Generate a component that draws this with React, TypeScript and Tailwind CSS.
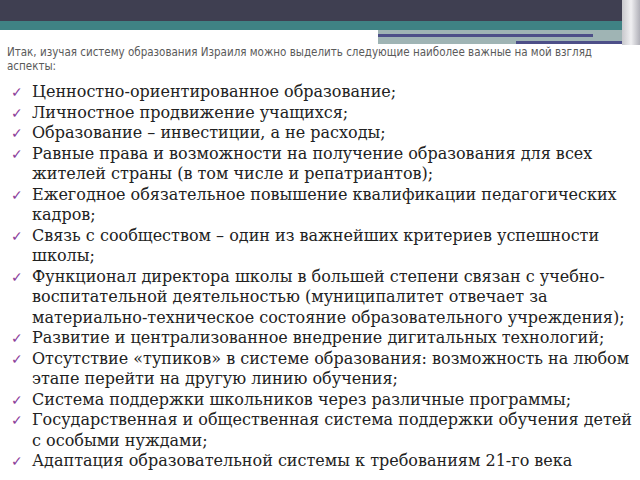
export default function App() {
  const items: string[][] = [
    ["Ценностно-ориентированное образование;"],
    ["Личностное продвижение учащихся;"],
    ["Образование – инвестиции, а не расходы;"],
    ["Равные права и возможности на получение образования для всех", "жителей страны (в том числе и репатриантов);"],
    ["Ежегодное обязательное повышение квалификации педагогических", "кадров;"],
    ["Связь с сообществом – один из важнейших критериев успешности", "школы;"],
    ["Функционал директора школы в большей степени связан с учебно-", "воспитательной деятельностью (муниципалитет отвечает за", "материально-техническое состояние образовательного учреждения);"],
    ["Развитие и централизованное внедрение дигитальных технологий;"],
    ["Отсутствие «тупиков» в системе образования: возможность на любом", "этапе перейти на другую линию обучения;"],
    ["Система поддержки школьников через различные программы;"],
    ["Государственная и общественная система поддержки обучения детей", "с особыми нуждами;"],
    ["Адаптация образовательной системы к требованиям 21-го века"],
  ];
  return (
    <div className="relative w-[640px] h-[480px] overflow-hidden bg-white">
      <div className="h-[21px] bg-[#3f3f51]" />
      <div className="h-[9px] bg-[#3f8284]" />
      <div className="absolute left-[378px] top-[30px] w-[262px] h-[14px] bg-[#9fb4b4]" />
      <div className="absolute left-[378px] top-[34px] w-[215px] h-[3px] bg-[#4d4f88]" />
      <div className="absolute left-[516px] top-[41px] w-[114px] h-[3px] bg-[#4d4f88]" />
      <div className="absolute left-[622px] top-0 w-[18px] h-[45px] bg-gradient-to-r from-[#c8c8cc] via-[#f0f0f2] to-[#b0b0b8]" />
      <div className="px-[7px] pt-[15px] text-[11.5px] leading-[14px] text-[#5a5a5a]" style={{ fontFamily: '"DejaVu Sans Condensed","DejaVu Sans",sans-serif' }}>
        Итак, изучая систему образования Израиля можно выделить следующие наиболее важные на мой взгляд<br />аспекты:
      </div>
      <div className="mt-[9px] flex flex-col" style={{ fontFamily: '"DejaVu Serif",serif' }}>
        {items.map((lines, i) => (
          <div key={i} className="flex">
            <span className="w-[32px] pl-[11px] text-[14px] leading-[20.5px] text-[#8a3d9a]">✓</span>
            <div className="text-[16px] leading-[20.5px] text-[#222]">
              {lines.map((l, j) => (
                <div key={j} className="whitespace-nowrap">{l}</div>
              ))}
            </div>
          </div>
        ))}
      </div>
    </div>
  );
}
